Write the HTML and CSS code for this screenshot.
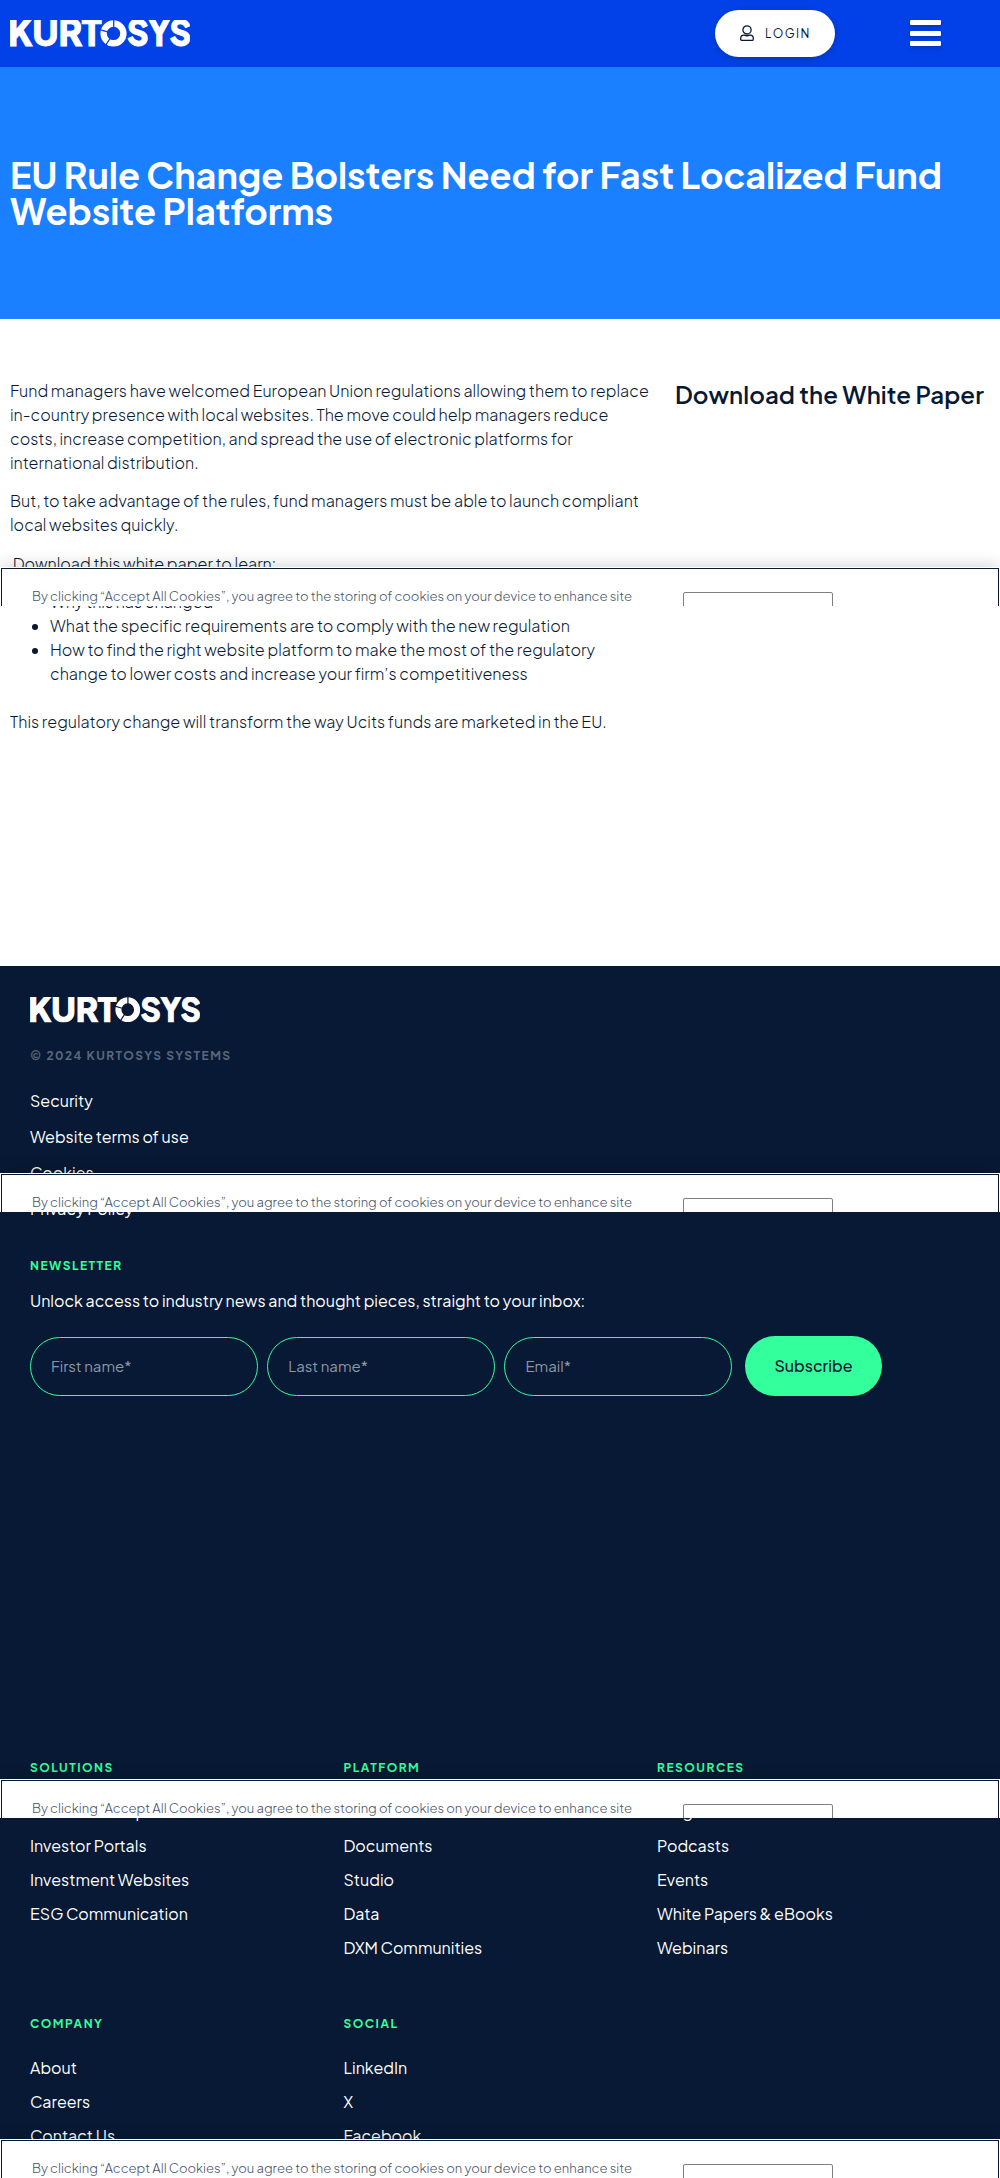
FILE: index.html
```html
<!DOCTYPE html>
<html lang="en">
<head>
<meta charset="utf-8">
<title>EU Rule Change Bolsters Need for Fast Localized Fund Website Platforms | Kurtosys</title>
<link rel="stylesheet" href="styles.css">
</head>
<body>
<svg class="sprite" aria-hidden="true">
  <symbol id="logo" viewBox="0 0 180 27">
    <text x="-2" y="26" textLength="93.5" lengthAdjust="spacingAndGlyphs" class="logo-text">KURT</text>
    <circle cx="103.5" cy="13.4" r="9.9" fill="none" stroke="currentColor" stroke-width="6.4"/>
    <path class="logo-gap" d="M103.700 8V-1M98.500 12.200 88 9.200M100.400 18 94.600 27"/>
    <text x="117" y="26" textLength="64" lengthAdjust="spacingAndGlyphs" class="logo-text">SYS</text>
  </symbol>
</svg>

<header class="topbar">
  <svg class="topbar-logo" role="img" aria-label="Kurtosys"><use href="#logo"/></svg>
  <div class="topbar-actions">
    <a class="login">
      <svg class="login-icon" viewBox="0 0 14 16"><circle cx="7" cy="4.900" r="4.100"/><path d="M3.900 10.200h.5c1.700.7 3.500.7 5.200 0h.5c1.800 0 3.200 1.400 3.200 3.200v.8c0 .7-.5 1.200-1.200 1.200H1.900c-.7 0-1.200-.5-1.200-1.200v-.8c0-1.800 1.400-3.200 3.200-3.200z"/></svg>
      <span>LOGIN</span>
    </a>
    <div class="menu-toggle"><i></i><i></i><i></i></div>
  </div>
</header>

<section class="hero">
  <h1>EU Rule Change Bolsters Need for Fast Localized Fund<br>Website Platforms</h1>
</section>

<main class="content">
  <article class="copy">
    <p>Fund managers have welcomed European Union regulations allowing them to replace<br>in-country presence with local websites. The move could help managers reduce<br>costs, increase competition, and spread the use of electronic platforms for<br>international distribution.</p>
    <p>But, to take advantage of the rules, fund managers must be able to launch compliant<br>local websites quickly.</p>
    <p>&nbsp;Download this white paper to learn:</p>
    <ul>
      <li>Why this has changed</li>
      <li>What the specific requirements are to comply with the new regulation</li>
      <li>How to find the right website platform to make the most of the regulatory<br>change to lower costs and increase your firm’s competitiveness</li>
    </ul>
    <p>This regulatory change will transform the way Ucits funds are marketed in the EU.</p>
  </article>
  <aside class="download"><h2>Download the White Paper</h2></aside>
</main>

<footer class="footer">
  <svg class="footer-logo" role="img" aria-label="Kurtosys"><use href="#logo"/></svg>
  <p class="label copyright">© 2024 KURTOSYS SYSTEMS</p>
  <nav class="legal">
    <a>Security</a><a>Website terms of use</a><a>Cookies</a><a>Privacy Policy</a>
  </nav>
  <section class="newsletter">
    <h3 class="label">NEWSLETTER</h3>
    <p>Unlock access to industry news and thought pieces, straight to your inbox:</p>
    <form class="signup">
      <input class="field" placeholder="First name*">
      <input class="field" placeholder="Last name*">
      <input class="field" placeholder="Email*">
      <button class="subscribe" type="button">Subscribe</button>
    </form>
  </section>
  <div class="sitemap">
    <nav class="group"><h3 class="label">SOLUTIONS</h3><a>Investment Experience Centers</a><a>Investor Portals</a><a>Investment Websites</a><a>ESG Communication</a></nav>
    <nav class="group"><h3 class="label">PLATFORM</h3><a>Email</a><a>Documents</a><a>Studio</a><a>Data</a><a>DXM Communities</a></nav>
    <nav class="group"><h3 class="label">RESOURCES</h3><a>Blog</a><a>Podcasts</a><a>Events</a><a>White Papers &amp; eBooks</a><a>Webinars</a></nav>
    <nav class="group"><h3 class="label">COMPANY</h3><a>About</a><a>Careers</a><a>Contact Us</a></nav>
    <nav class="group"><h3 class="label">SOCIAL</h3><a>LinkedIn</a><a>X</a><a>Facebook</a></nav>
  </div>
</footer>

<div class="cookie cookie-1"><div class="cookie-frame"><p>By clicking “Accept All Cookies”, you agree to the storing of cookies on your device to enhance site</p><span class="cookie-button"></span></div></div>
<div class="cookie cookie-2"><div class="cookie-frame"><p>By clicking “Accept All Cookies”, you agree to the storing of cookies on your device to enhance site</p><span class="cookie-button"></span></div></div>
<div class="cookie cookie-3"><div class="cookie-frame"><p>By clicking “Accept All Cookies”, you agree to the storing of cookies on your device to enhance site</p><span class="cookie-button"></span></div></div>
<div class="cookie cookie-4"><div class="cookie-frame"><p>By clicking “Accept All Cookies”, you agree to the storing of cookies on your device to enhance site</p><span class="cookie-button"></span></div></div>
</body>
</html>
```
FILE: styles.css
```css
* { box-sizing: border-box; }

body {
  position: relative;
  margin: 0;
  height: 2178px;
  overflow: hidden;
  background: #fff;
  color: #071934;
  font: 400 16px/24px "Plus Jakarta Sans", Inter, "Open Sans", sans-serif;
}

h1, h2, h3, p, ul { margin: 0; }

.sprite { position: absolute; width: 0; height: 0; }
.logo-text { font-size: 35px; font-weight: 800; fill: currentColor; stroke: currentColor; stroke-width: .9; }
.logo-gap { fill: none; stroke: var(--logo-bg); stroke-width: 1.3; }

.topbar {
  --logo-bg: #0241e8;
  display: flex;
  justify-content: space-between;
  height: 67px;
  padding: 10px 59px 10px 10px;
  background: #0241e8;
  color: #fff;
}
.topbar-logo { width: 180px; height: 27px; margin-top: 10px; overflow: visible; }
.topbar-actions { display: flex; align-items: flex-start; gap: 75px; }

.login {
  display: flex;
  align-items: center;
  gap: 11px;
  width: 120px;
  height: 47px;
  padding: 0 0 1px 25px;
  border-radius: 23.5px;
  background: #fff;
  box-shadow: 0 2px 6px rgba(0, 0, 0, .2);
  color: #071934;
  font-size: 12px;
  line-height: 15px;
  letter-spacing: 1.5px;
}
.login-icon { width: 14px; height: 16px; fill: none; stroke: #071934; stroke-width: 1.3; }

.menu-toggle {
  display: flex;
  flex-direction: column;
  justify-content: space-between;
  width: 31px;
  height: 26px;
  margin-top: 10px;
  filter: drop-shadow(0 2px 2px rgba(0, 0, 0, .2));
}
.menu-toggle i { height: 5px; border-radius: 1px; background: #fff; }

.hero { height: 252px; padding: 90px 10px; background: #1a80ff; }
.hero h1 { color: #fff; font-size: 36px; font-weight: 700; line-height: 36px; white-space: nowrap; }

.content {
  display: grid;
  grid-template-columns: 665px 1fr;
  height: 647px;
  padding: 60px 0 0 10px;
}
.copy { font-weight: 300; letter-spacing: .01px; white-space: nowrap; }
.copy p { margin-bottom: 14.4px; }
.copy ul { margin-bottom: 24px; padding-left: 40px; }
.download h2 { font-size: 24px; font-weight: 600; line-height: 30px; letter-spacing: .09px; white-space: nowrap; }

.footer {
  --logo-bg: #071934;
  height: 1212px;
  padding: 31px 30px 0;
  background: #071934;
  color: #fff;
  line-height: 21px;
}
.footer-logo { display: block; width: 170px; height: 25.5px; margin-bottom: 25.5px; overflow: visible; }

.label { color: #33ff9c; font-size: 12px; font-weight: 700; line-height: 15px; letter-spacing: 1.5px; }
.copyright { margin-bottom: 27px; color: #5b677b; }
.legal { display: flex; flex-direction: column; gap: 15px; }

.newsletter { margin-top: 39px; }
.newsletter .label { margin-bottom: 17px; }

.signup { display: flex; align-items: flex-end; gap: 9.5px; margin-top: 25px; }
.field {
  width: 227.700px;
  height: 59px;
  padding: 0 20px 2px;
  border: 1px solid #33ff9c;
  border-radius: 30px;
  background: transparent;
  color: #fff;
  font: 400 15px/19px "Plus Jakarta Sans", Inter, "Open Sans", sans-serif;
}
.field::placeholder { color: #8e97a6; opacity: 1; }
.subscribe {
  width: 137px;
  height: 60px;
  margin-left: 3.4px;
  padding: 0 0 1px;
  border: 0;
  border-radius: 30px;
  background: #33ff9c;
  color: #071934;
  font: 500 16px/21px "Plus Jakarta Sans", Inter, "Open Sans", sans-serif;
}

.sitemap {
  display: grid;
  grid-template-columns: repeat(3, 313.5px);
  grid-template-rows: 256px auto;
  margin-top: 364px;
}
.group { display: flex; flex-direction: column; gap: 13px; white-space: nowrap; }
.group .label { margin-bottom: 13px; }

/* Consent banners float over the page; only their upper edge shows. */
.cookie {
  position: absolute;
  left: 0;
  width: 1000px;
  height: 39px;
  padding: 1px 1px 0;
  background: #fff;
  box-shadow: 0 0 18px rgba(0, 0, 0, .2);
  clip-path: inset(-30px 0 0 0);
}
.cookie-frame {
  display: flex;
  height: 38px;
  padding-left: 30px;
  overflow: hidden;
  border: 1px solid #071934;
  border-bottom: 0;
}
.cookie p {
  width: 651px;
  padding-top: 19px;
  color: #465268;
  font-size: 13.008px;
  font-weight: 300;
  line-height: 17px;
  letter-spacing: .008px;
  white-space: nowrap;
}
.cookie-button {
  flex: none;
  width: 150px;
  height: 40px;
  margin-top: 23px;
  border: 1px solid #808080;
  border-radius: 2px;
}
.cookie-1 { top: 567px; }
.cookie-2 { top: 1173px; }
.cookie-3 { top: 1779px; }
.cookie-4 { top: 2139px; }
```
